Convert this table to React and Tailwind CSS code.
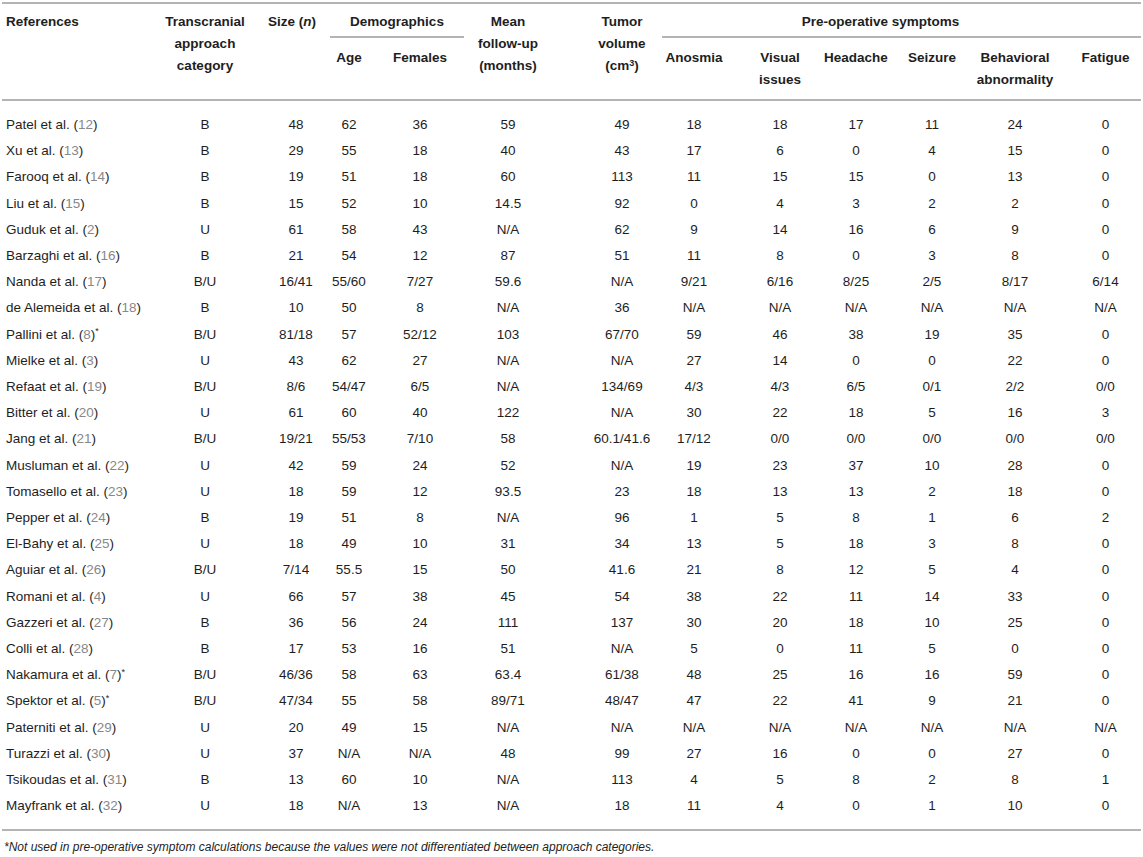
import React from 'react';

// Study rows: [authors, ref, mark, approach, size, age, females, followUp, volume, anosmia, visual, headache, seizure, behavioral, fatigue]
const ROWS = [
  ['Patel et al.', '12', '', 'B', '48', '62', '36', '59', '49', '18', '18', '17', '11', '24', '0'],
  ['Xu et al.', '13', '', 'B', '29', '55', '18', '40', '43', '17', '6', '0', '4', '15', '0'],
  ['Farooq et al.', '14', '', 'B', '19', '51', '18', '60', '113', '11', '15', '15', '0', '13', '0'],
  ['Liu et al.', '15', '', 'B', '15', '52', '10', '14.5', '92', '0', '4', '3', '2', '2', '0'],
  ['Guduk et al.', '2', '', 'U', '61', '58', '43', 'N/A', '62', '9', '14', '16', '6', '9', '0'],
  ['Barzaghi et al.', '16', '', 'B', '21', '54', '12', '87', '51', '11', '8', '0', '3', '8', '0'],
  ['Nanda et al.', '17', '', 'B/U', '16/41', '55/60', '7/27', '59.6', 'N/A', '9/21', '6/16', '8/25', '2/5', '8/17', '6/14'],
  ['de Alemeida et al.', '18', '', 'B', '10', '50', '8', 'N/A', '36', 'N/A', 'N/A', 'N/A', 'N/A', 'N/A', 'N/A'],
  ['Pallini et al.', '8', '*', 'B/U', '81/18', '57', '52/12', '103', '67/70', '59', '46', '38', '19', '35', '0'],
  ['Mielke et al.', '3', '', 'U', '43', '62', '27', 'N/A', 'N/A', '27', '14', '0', '0', '22', '0'],
  ['Refaat et al.', '19', '', 'B/U', '8/6', '54/47', '6/5', 'N/A', '134/69', '4/3', '4/3', '6/5', '0/1', '2/2', '0/0'],
  ['Bitter et al.', '20', '', 'U', '61', '60', '40', '122', 'N/A', '30', '22', '18', '5', '16', '3'],
  ['Jang et al.', '21', '', 'B/U', '19/21', '55/53', '7/10', '58', '60.1/41.6', '17/12', '0/0', '0/0', '0/0', '0/0', '0/0'],
  ['Musluman et al.', '22', '', 'U', '42', '59', '24', '52', 'N/A', '19', '23', '37', '10', '28', '0'],
  ['Tomasello et al.', '23', '', 'U', '18', '59', '12', '93.5', '23', '18', '13', '13', '2', '18', '0'],
  ['Pepper et al.', '24', '', 'B', '19', '51', '8', 'N/A', '96', '1', '5', '8', '1', '6', '2'],
  ['El-Bahy et al.', '25', '', 'U', '18', '49', '10', '31', '34', '13', '5', '18', '3', '8', '0'],
  ['Aguiar et al.', '26', '', 'B/U', '7/14', '55.5', '15', '50', '41.6', '21', '8', '12', '5', '4', '0'],
  ['Romani et al.', '4', '', 'U', '66', '57', '38', '45', '54', '38', '22', '11', '14', '33', '0'],
  ['Gazzeri et al.', '27', '', 'B', '36', '56', '24', '111', '137', '30', '20', '18', '10', '25', '0'],
  ['Colli et al.', '28', '', 'B', '17', '53', '16', '51', 'N/A', '5', '0', '11', '5', '0', '0'],
  ['Nakamura et al.', '7', '*', 'B/U', '46/36', '58', '63', '63.4', '61/38', '48', '25', '16', '16', '59', '0'],
  ['Spektor et al.', '5', '*', 'B/U', '47/34', '55', '58', '89/71', '48/47', '47', '22', '41', '9', '21', '0'],
  ['Paterniti et al.', '29', '', 'U', '20', '49', '15', 'N/A', 'N/A', 'N/A', 'N/A', 'N/A', 'N/A', 'N/A', 'N/A'],
  ['Turazzi et al.', '30', '', 'U', '37', 'N/A', 'N/A', '48', '99', '27', '16', '0', '0', '27', '0'],
  ['Tsikoudas et al.', '31', '', 'B', '13', '60', '10', 'N/A', '113', '4', '5', '8', '2', '8', '1'],
  ['Mayfrank et al.', '32', '', 'U', '18', 'N/A', '13', 'N/A', '18', '11', '4', '0', '1', '10', '0'],
];

// per-column cell padding, keeps centred values over their headers
const COL_PAD = ['', '', 'pl-2', '', '', 'pr-1', 'pl-8', '', 'pl-3', '', '', '', 'pl-3'];

export default function App() {
  const last = ROWS.length - 1;

  return (
    <div className="min-h-screen bg-white px-[2px] pt-[2px] font-['Liberation_Sans',Arial,sans-serif] text-[13.5px] text-[#1e1e1e]">
      <table className="w-[1139px] table-fixed border-collapse">
        <colgroup>
          <col className="w-[150px]" />
          <col className="w-[106px]" />
          <col className="w-[68px]" />
          <col className="w-[46px]" />
          <col className="w-[96px]" />
          <col className="w-[84px]" />
          <col className="w-[108px]" />
          <col className="w-[68px]" />
          <col className="w-[92px]" />
          <col className="w-[72px]" />
          <col className="w-[80px]" />
          <col className="w-[86px]" />
          <col className="w-[83px]" />
        </colgroup>
        <thead className="border-y-2 border-[#b4b4b4] font-bold leading-[22px]">
          <tr className="align-top">
            <th rowSpan={2} className="pl-1 pt-[7px] text-left">References</th>
            <th rowSpan={2} className="pt-[7px] text-center">
              Transcranial<br />approach<br />category
            </th>
            <th rowSpan={2} className="pt-[7px] text-center">
              Size (<i>n</i>)
            </th>
            <th colSpan={2} className="px-1 pt-[7px]">
              <div className="border-b-2 border-[#b4b4b4] pb-[3px] text-center">Demographics</div>
            </th>
            <th rowSpan={2} className="pr-1 pt-[7px] text-center">
              Mean<br />follow-up<br />(months)
            </th>
            <th rowSpan={2} className="pl-8 pt-[7px] text-center">
              Tumor<br />volume<br />(cm<sup className="text-[9px]">3</sup>)
            </th>
            <th colSpan={6} className="pl-[2px] pt-[7px]">
              <div className="border-b-2 border-[#b4b4b4] pb-[3px] pr-[42px] text-center">Pre-operative symptoms</div>
            </th>
          </tr>
          <tr className="align-top">
            <th className="pt-[9px] pb-2 text-center">Age</th>
            <th className="pt-[9px] pb-2 text-center">Females</th>
            <th className="pt-[9px] pb-2 text-center">Anosmia</th>
            <th className="pl-3 pt-[9px] pb-2 text-center">
              Visual<br />issues
            </th>
            <th className="pt-[9px] pb-2 text-center">Headache</th>
            <th className="pt-[9px] pb-2 text-center">Seizure</th>
            <th className="pt-[9px] pb-2 text-center">
              Behavioral<br />abnormality
            </th>
            <th className="pl-3 pt-[9px] pb-2 text-center">Fatigue</th>
          </tr>
        </thead>
        <tbody className="border-b-2 border-[#b4b4b4] leading-[26.2px]">
          {ROWS.map((row, i) => {
            const [name, ref, mark, ...values] = row;
            const edge = i === 0 ? 'pt-[11px]' : i === last ? 'pb-[10px]' : '';
            return (
              <tr key={name}>
                <td className={`whitespace-nowrap pl-1 text-left ${edge}`}>
                  {name} (<span className="text-[#888888]">{ref}</span>)
                  {mark && <sup className="text-[9px]">{mark}</sup>}
                </td>
                {values.map((v, j) => (
                  <td key={j} className={`whitespace-nowrap text-center ${COL_PAD[j + 1]} ${edge}`}>
                    {v}
                  </td>
                ))}
              </tr>
            );
          })}
        </tbody>
      </table>
      <p className="mt-2 pl-[2px] text-[12px] italic leading-4">
        *Not used in pre-operative symptom calculations because the values were not differentiated between approach categories.
      </p>
    </div>
  );
}
